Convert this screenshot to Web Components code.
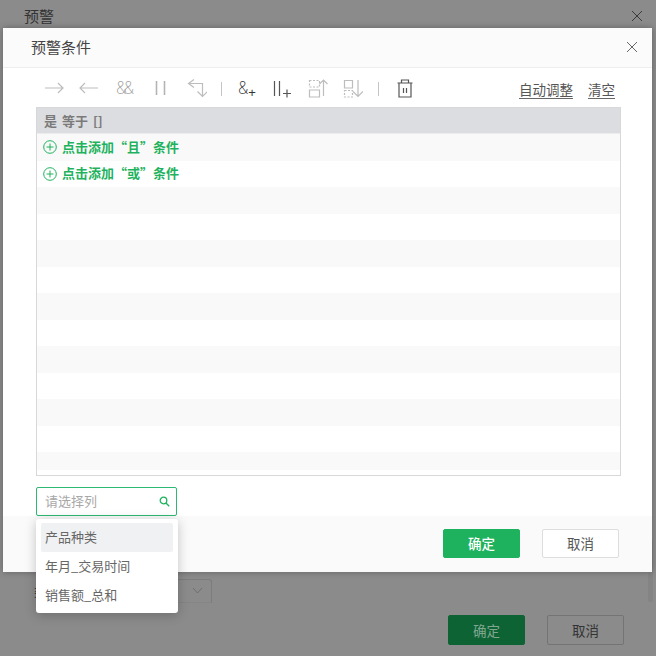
<!DOCTYPE html>
<html lang="zh">
<head>
<meta charset="utf-8">
<title>预警</title>
<style>
  html, body { margin: 0; height: 100%; }
  body {
    width: 656px;
    height: 656px;
    position: relative;
    overflow: hidden;
    background: #8b8b8b;
    font-family: "Noto Sans CJK SC", "Liberation Sans", sans-serif;
  }
</style>
</head>
<body>
<back-dialog></back-dialog>
<condition-dialog></condition-dialog>

<script>
const closeIcon = size => `<svg width="${size}" height="${size}" viewBox="0 0 12 12" fill="none" stroke="currentColor" stroke-width="1"><path d="M1 1l10 10M11 1L1 11"></path></svg>`;

// the dimmed dialog behind the overlay
class BackDialog extends HTMLElement {
  connectedCallback() {
    this.attachShadow({ mode: 'open' });
    this.shadowRoot.innerHTML = `
      <style>
        :host { display: flex; flex-direction: column; height: 656px; box-sizing: border-box; color: #333; }
        .title { display: flex; justify-content: space-between; align-items: center; padding: 5px 13px 0 24px; font-size: 15px; line-height: 22px; }
        .title svg { display: block; color: #3a3a3a; }
        .mid { flex: 1; display: flex; align-items: flex-end; padding: 0 0 12px 34px; }
        .label { font-size: 13px; line-height: 24px; }
        .select { width: 165px; height: 24px; box-sizing: border-box; border: 1px solid #7c7c7c; border-bottom-color: #858585; border-top-right-radius: 3px; display: flex; justify-content: flex-end; align-items: center; padding: 0 8px 0 0; }
        .foot { display: flex; justify-content: flex-end; gap: 22px; padding: 0 32px 11px 0; }
        button { width: 77px; height: 30px; box-sizing: border-box; border-radius: 2px; font: inherit; font-size: 13.500px; padding: 0 0 1px; }
        .ok { background: #0e6335; border: 1px solid #0e6335; color: #7fa78f; }
        .no { background: #8b8b8b; border: 1px solid #747474; color: #333; }
        .thumb { position: absolute; left: 648px; top: 540px; width: 5px; height: 62px; border-radius: 2px; background: #848484; }
      </style>
      <div class="title"><span>预警</span>${closeIcon(12)}</div>
      <div class="mid">
        <span class="label">类</span>
        <div class="select"><svg width="11" height="8" viewBox="0 0 11 8" fill="none" stroke="#6f6f6f"><path d="M1 1l4.500 5 4.500-5"></path></svg></div>
      </div>
      <div class="foot"><button class="ok">确定</button><button class="no">取消</button></div>
      <div class="thumb"></div>
    `;
  }
}

class ToolBar extends HTMLElement {
  connectedCallback() {
    this.attachShadow({ mode: 'open' });
    const on = '#555', off = '#bdbdbd';
    const icon = (w, color, d, extra = '') => `<svg width="${w}" height="20" viewBox="0 0 ${w} 20" fill="none" stroke="${color}" stroke-width="1.200"><path d="${d}"></path>${extra}</svg>`;
    this.shadowRoot.innerHTML = `
      <style>
        :host { display: flex; align-items: center; height: 39px; padding: 0 6px 0 8px; color: #555; }
        svg { display: block; flex: none; }
        .amp { font: 200 17px/20px Inter, "Liberation Sans", sans-serif; width: 18px; letter-spacing: -2.500px; color: #a0a0a0; white-space: nowrap; }
        .amp.on { width: 19px; color: #333; letter-spacing: 0; }
        .amp sup { font: 400 13px/0 "Liberation Sans", sans-serif; vertical-align: -3px; }
        .sep { width: 1px; height: 14px; background: #c4c4c4; }
        .links { margin-left: auto; display: flex; gap: 15px; font-size: 13.500px; line-height: 18px; color: #555; margin-top: 3px; }
        .links span { border-bottom: 1px solid #666; }
      </style>
      ${icon(20, off, 'M1 10h18M14 5l5 5-5 5')}
      <span style="width:15px"></span>
      ${icon(20, off, 'M19 10H1M6 5l-5 5 5 5')}
      <span class="amp" style="margin:0 17px">&amp;&amp;</span>
      <svg width="20" height="20" viewBox="0 0 20 20" fill="none" stroke="#b4b4b4" stroke-width="1.600"><path d="M5.500 3v14M13.500 3v14"></path></svg>
      <span style="width:16px"></span>
      ${icon(20, off, 'M7 1.500L1.500 5.500l5.500 4M1.500 5.500h14v13M10.500 13.500l5 5 5-5')}
      <div class="sep" style="margin:3px 16px 0 14px"></div>
      <span class="amp on" style="margin-right:15px">&amp;<sup>+</sup></span>
      ${icon(20, on, 'M2.500 3v15M7.500 3v15M11 15.500h8M15 11.500v8')}
      <span style="width:16px"></span>
      ${icon(20, off, 'M1.500 12h10v7h-10zM15.500 18V2M11.500 6l4-4 4 4', '<path stroke-dasharray="2 1.500" d="M1.500 2.500h10v6.500h-10z"></path>')}
      <span style="width:15px"></span>
      ${icon(20, off, 'M1.500 2.500h8v7.500h-8zM15 2v16.500M10 13.500l5 5 5-5', '<path stroke-dasharray="2 1.500" d="M1.500 12.500h8v6.500h-8z"></path>')}
      <div class="sep" style="margin:3px 18px 0 15px"></div>
      ${icon(16, on, 'M.5 5h15M2 5v14h12V5M4.500 5V2h7v3M6.500 10v5M9.500 10v5')}
      <div class="links"><span>自动调整</span><span>清空</span></div>
    `;
  }
}

class ConditionTable extends HTMLElement {
  connectedCallback() {
    this.attachShadow({ mode: 'open' });
    const add = text => `<div class="row add"><svg width="14" height="14" viewBox="0 0 14 14" fill="none" stroke="#1fb25e"><circle cx="7" cy="7" r="6.300"></circle><path d="M3.500 7h7M7 3.500v7"></path></svg><b>${text}</b></div>`;
    let empty = '';
    for (let i = 0; i < 12; i++) empty += '<div class="row"></div>';
    this.shadowRoot.innerHTML = `
      <style>
        :host { display: block; height: 369px; box-sizing: border-box; border: 1px solid #d8d8d8; overflow: hidden; background: #fff; }
        .head { height: 26px; box-sizing: border-box; background: #dcdde0; border-bottom: 1px solid #ececec; padding-left: 7px; font-size: 13px; font-weight: 700; line-height: 25px; word-spacing: 2px; color: #7a7a7a; }
        .rows { height: 336px; overflow: hidden; }
        .row { height: 26.500px; box-sizing: border-box; display: flex; align-items: center; gap: 5px; padding-left: 6px; background: #fff; }
        .row:nth-child(odd) { background: #f9f9f9; }
        .add b { font-size: 13px; color: #1fb25e; font-weight: 700; padding-bottom: 2px; }
        svg { display: block; }
      </style>
      <div class="head">是 等于 []</div>
      <div class="rows">
        ${add('点击添加“且”条件')}
        ${add('点击添加“或”条件')}
        ${empty}
      </div>
    `;
  }
}

class ColumnPicker extends HTMLElement {
  connectedCallback() {
    this.attachShadow({ mode: 'open' });
    this.shadowRoot.innerHTML = `
      <style>
        :host { display: block; position: relative; width: 141px; }
        .box { height: 29px; box-sizing: border-box; border: 1px solid #2db974; border-radius: 2px; background: #fff; display: flex; align-items: center; justify-content: space-between; padding: 0 6px 0 8px; font-size: 13px; color: #a8a8a8; }
        .box span { padding-bottom: 2px; }
        svg { display: block; }
        .menu { position: absolute; left: 0; top: 32px; width: 142px; height: 94px; box-sizing: border-box; padding: 4px 5px; background: #fff; border-radius: 3px; box-shadow: 0 2px 12px rgba(0, 0, 0, .22); z-index: 2; font-size: 13px; color: #666; }
        .item { height: 29px; line-height: 27px; padding-left: 4px; border-radius: 2px; white-space: nowrap; }
        .item.active { background: #f0f1f3; }
      </style>
      <div class="box">
        <span>请选择列</span>
        <svg width="11" height="11" viewBox="0 0 11 11" fill="none" stroke="#1fb25e" stroke-width="1.300"><circle cx="4.500" cy="4.500" r="3.300"></circle><path d="M7 7l3.200 3.200"></path></svg>
      </div>
      <div class="menu">
        <div class="item active">产品种类</div>
        <div class="item">年月_交易时间</div>
        <div class="item">销售额_总和</div>
      </div>
    `;
  }
}

class ConditionDialog extends HTMLElement {
  connectedCallback() {
    this.attachShadow({ mode: 'open' });
    this.shadowRoot.innerHTML = `
      <style>
        :host { display: flex; flex-direction: column; position: absolute; left: 3px; top: 28px; width: 649px; height: 544px; background: #fff; border-radius: 2px; box-shadow: 0 0 6px rgba(0, 0, 0, .3); color: #444; }
        .head { height: 40px; box-sizing: border-box; background: #fbfbfb; border-bottom: 1px solid #eee; display: flex; align-items: center; justify-content: space-between; padding: 0 14px 2px 28px; font-size: 15px; color: #444; flex: none; }
        .head svg { color: #666; display: block; }
        .body { height: 448px; box-sizing: border-box; padding: 0 31px 0 33px; flex: none; }
        .pick { margin-top: 11px; }
        .foot { flex: 1; background: #fafafa; display: flex; justify-content: flex-end; align-items: flex-start; gap: 22px; padding: 13px 33px 0 0; }
        button { width: 77px; height: 29px; box-sizing: border-box; border-radius: 2px; font: inherit; font-size: 13.500px; padding: 0 0 1px; }
        .ok { background: #1fb25e; border: 1px solid #1fb25e; color: #fff; font-weight: 500; }
        .no { background: #fff; border: 1px solid #ddd; color: #555; }
      </style>
      <div class="head"><span>预警条件</span>${closeIcon(12)}</div>
      <div class="body">
        <tool-bar></tool-bar>
        <condition-table></condition-table>
        <column-picker class="pick"></column-picker>
      </div>
      <div class="foot"><button class="ok">确定</button><button class="no">取消</button></div>
    `;
  }
}

customElements.define('back-dialog', BackDialog);
customElements.define('tool-bar', ToolBar);
customElements.define('condition-table', ConditionTable);
customElements.define('column-picker', ColumnPicker);
customElements.define('condition-dialog', ConditionDialog);
</script>
</body>
</html>
